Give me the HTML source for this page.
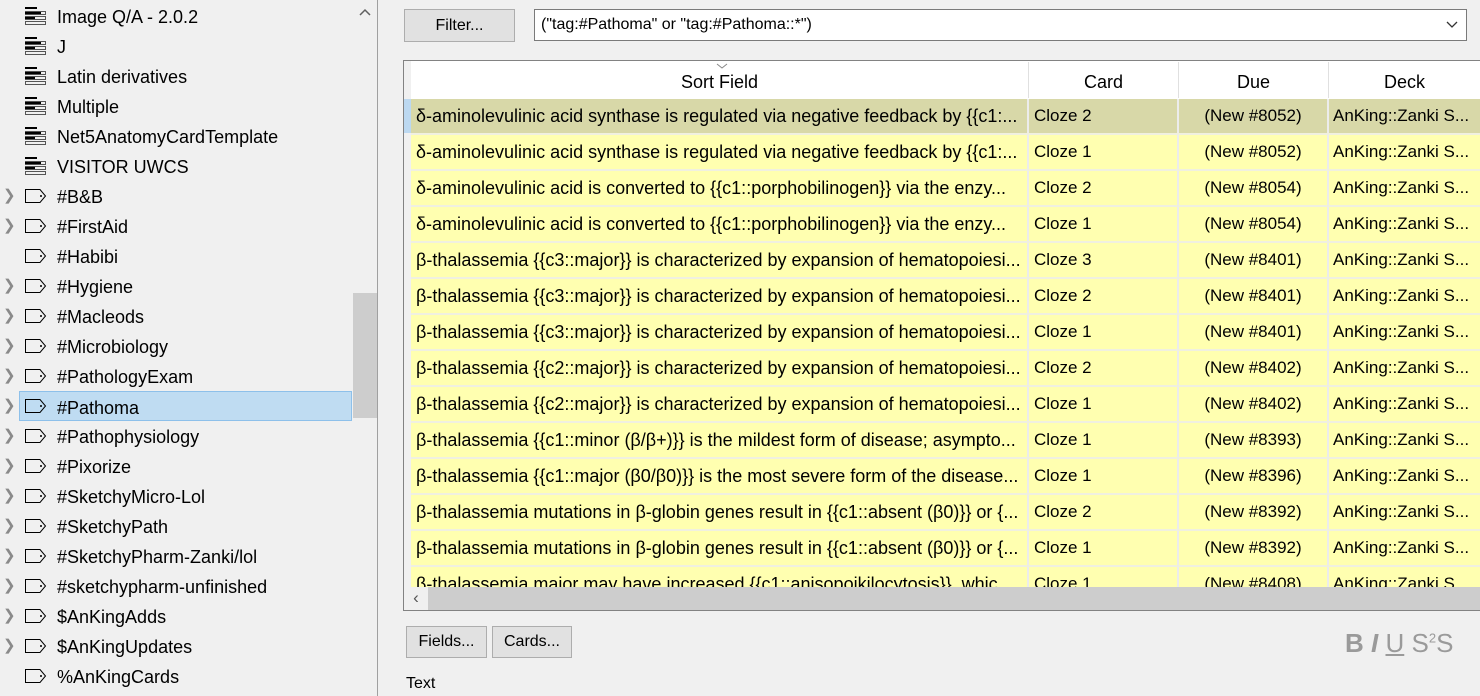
<!DOCTYPE html>
<html><head><meta charset="utf-8"><style>
*{margin:0;padding:0;box-sizing:border-box}
body{width:1480px;height:696px;background:#f0f0f0;font-family:"Liberation Sans",sans-serif;font-size:17px;color:#000;position:relative;overflow:hidden}
.side{position:absolute;left:0;top:0;width:378px;height:696px;border-right:1px solid #a0a0a0;font-size:18px}
.row{position:absolute;left:0;height:30px;width:352px;line-height:30px;white-space:nowrap}
.row .t{position:absolute;left:57px;top:1px}
.row svg{position:absolute;left:24px;top:6px}
.chev{position:absolute;left:3px;top:0;color:#8a8a8a;font-size:15px}
.sel{background:#bfdcf2;border:1px solid #8dc0ea;left:19px;width:333px}
.sel .t{left:37px}.sel svg{left:4px;top:5px}
.vsb{position:absolute;left:353px;top:0;width:24px;height:696px;background:#f0f0f0}
.thumb{position:absolute;left:353px;top:293px;width:24px;height:125px;background:#cdcdcd}
.btn{position:absolute;background:#e1e1e1;border:1px solid #adadad;text-align:center;font-size:16px}
.combo{position:absolute;left:534px;top:9px;width:933px;height:32px;background:#fff;border:1px solid #7a7a7a;line-height:30px;padding-left:6px;font-size:16px}
.tbl{position:absolute;left:403px;top:60px;width:1077px;height:551px;border:1px solid #828282;border-right:none;background:#fff;overflow:hidden}
.hd{position:absolute;top:1px;height:36px;line-height:40px;text-align:center;border-right:1px solid #e0e0e0;background:#fff}
.r{position:absolute;left:7px;width:1070px;height:36px;background:#ffffb0;border-bottom:2px solid #f0f0e0}
.r.s{background:#d8d8a8}
.c{position:absolute;top:0;height:34px;line-height:34px;white-space:nowrap;overflow:hidden;border-right:2px solid #ececec}
.c1{left:0;width:618px;padding-left:5px;font-size:18px}
.c2{left:618px;width:150px;padding-left:5px}
.c3{left:768px;width:150px;text-align:center}
.c4{left:918px;width:160px;padding-left:4px}
.hsb{position:absolute;left:0;top:526px;width:1077px;height:23px;background:#cdcdcd}
.hsb .l{position:absolute;left:0;top:0;width:24px;height:23px;background:#f0f0f0;text-align:center;line-height:22px;color:#555}
</style></head><body>
<div class="side">
<div class="row" style="top:1px"><svg width="24" height="20" viewBox="0 0 24 20"><g fill="none" stroke="#555"><rect x="1.5" y="4.5" width="20" height="3"/><rect x="1.5" y="9.5" width="20" height="3"/><rect x="1.5" y="14.5" width="20" height="3"/></g><rect x="1" y="0" width="12" height="2" fill="#000"/><rect x="1" y="5" width="16" height="2" fill="#000"/><rect x="1" y="10" width="10" height="2" fill="#000"/></svg><span class="t">Image Q/A - 2.0.2</span></div>
<div class="row" style="top:31px"><svg width="24" height="20" viewBox="0 0 24 20"><g fill="none" stroke="#555"><rect x="1.5" y="4.5" width="20" height="3"/><rect x="1.5" y="9.5" width="20" height="3"/><rect x="1.5" y="14.5" width="20" height="3"/></g><rect x="1" y="0" width="12" height="2" fill="#000"/><rect x="1" y="5" width="16" height="2" fill="#000"/><rect x="1" y="10" width="10" height="2" fill="#000"/></svg><span class="t">J</span></div>
<div class="row" style="top:61px"><svg width="24" height="20" viewBox="0 0 24 20"><g fill="none" stroke="#555"><rect x="1.5" y="4.5" width="20" height="3"/><rect x="1.5" y="9.5" width="20" height="3"/><rect x="1.5" y="14.5" width="20" height="3"/></g><rect x="1" y="0" width="12" height="2" fill="#000"/><rect x="1" y="5" width="16" height="2" fill="#000"/><rect x="1" y="10" width="10" height="2" fill="#000"/></svg><span class="t">Latin derivatives</span></div>
<div class="row" style="top:91px"><svg width="24" height="20" viewBox="0 0 24 20"><g fill="none" stroke="#555"><rect x="1.5" y="4.5" width="20" height="3"/><rect x="1.5" y="9.5" width="20" height="3"/><rect x="1.5" y="14.5" width="20" height="3"/></g><rect x="1" y="0" width="12" height="2" fill="#000"/><rect x="1" y="5" width="16" height="2" fill="#000"/><rect x="1" y="10" width="10" height="2" fill="#000"/></svg><span class="t">Multiple</span></div>
<div class="row" style="top:121px"><svg width="24" height="20" viewBox="0 0 24 20"><g fill="none" stroke="#555"><rect x="1.5" y="4.5" width="20" height="3"/><rect x="1.5" y="9.5" width="20" height="3"/><rect x="1.5" y="14.5" width="20" height="3"/></g><rect x="1" y="0" width="12" height="2" fill="#000"/><rect x="1" y="5" width="16" height="2" fill="#000"/><rect x="1" y="10" width="10" height="2" fill="#000"/></svg><span class="t">Net5AnatomyCardTemplate</span></div>
<div class="row" style="top:151px"><svg width="24" height="20" viewBox="0 0 24 20"><g fill="none" stroke="#555"><rect x="1.5" y="4.5" width="20" height="3"/><rect x="1.5" y="9.5" width="20" height="3"/><rect x="1.5" y="14.5" width="20" height="3"/></g><rect x="1" y="0" width="12" height="2" fill="#000"/><rect x="1" y="5" width="16" height="2" fill="#000"/><rect x="1" y="10" width="10" height="2" fill="#000"/></svg><span class="t">VISITOR UWCS</span></div>
<div class="row" style="top:181px"><span class="chev">❯</span><svg width="24" height="18" viewBox="0 0 24 18"><path d="M1.5 2.5H16L21.5 9L16 15.5H1.5Z" fill="none" stroke="#000"/><circle cx="17" cy="9" r="1" fill="#000"/></svg><span class="t">#B&amp;B</span></div>
<div class="row" style="top:211px"><span class="chev">❯</span><svg width="24" height="18" viewBox="0 0 24 18"><path d="M1.5 2.5H16L21.5 9L16 15.5H1.5Z" fill="none" stroke="#000"/><circle cx="17" cy="9" r="1" fill="#000"/></svg><span class="t">#FirstAid</span></div>
<div class="row" style="top:241px"><svg width="24" height="18" viewBox="0 0 24 18"><path d="M1.5 2.5H16L21.5 9L16 15.5H1.5Z" fill="none" stroke="#000"/><circle cx="17" cy="9" r="1" fill="#000"/></svg><span class="t">#Habibi</span></div>
<div class="row" style="top:271px"><span class="chev">❯</span><svg width="24" height="18" viewBox="0 0 24 18"><path d="M1.5 2.5H16L21.5 9L16 15.5H1.5Z" fill="none" stroke="#000"/><circle cx="17" cy="9" r="1" fill="#000"/></svg><span class="t">#Hygiene</span></div>
<div class="row" style="top:301px"><span class="chev">❯</span><svg width="24" height="18" viewBox="0 0 24 18"><path d="M1.5 2.5H16L21.5 9L16 15.5H1.5Z" fill="none" stroke="#000"/><circle cx="17" cy="9" r="1" fill="#000"/></svg><span class="t">#Macleods</span></div>
<div class="row" style="top:331px"><span class="chev">❯</span><svg width="24" height="18" viewBox="0 0 24 18"><path d="M1.5 2.5H16L21.5 9L16 15.5H1.5Z" fill="none" stroke="#000"/><circle cx="17" cy="9" r="1" fill="#000"/></svg><span class="t">#Microbiology</span></div>
<div class="row" style="top:361px"><span class="chev">❯</span><svg width="24" height="18" viewBox="0 0 24 18"><path d="M1.5 2.5H16L21.5 9L16 15.5H1.5Z" fill="none" stroke="#000"/><circle cx="17" cy="9" r="1" fill="#000"/></svg><span class="t">#PathologyExam</span></div>
<div class="row" style="top:391px;width:auto;left:0"><span class="chev">❯</span></div>
<div class="row sel" style="top:391px"><svg width="24" height="18" viewBox="0 0 24 18"><path d="M1.5 2.5H16L21.5 9L16 15.5H1.5Z" fill="none" stroke="#000"/><circle cx="17" cy="9" r="1" fill="#000"/></svg><span class="t">#Pathoma</span></div>
<div class="row" style="top:421px"><span class="chev">❯</span><svg width="24" height="18" viewBox="0 0 24 18"><path d="M1.5 2.5H16L21.5 9L16 15.5H1.5Z" fill="none" stroke="#000"/><circle cx="17" cy="9" r="1" fill="#000"/></svg><span class="t">#Pathophysiology</span></div>
<div class="row" style="top:451px"><span class="chev">❯</span><svg width="24" height="18" viewBox="0 0 24 18"><path d="M1.5 2.5H16L21.5 9L16 15.5H1.5Z" fill="none" stroke="#000"/><circle cx="17" cy="9" r="1" fill="#000"/></svg><span class="t">#Pixorize</span></div>
<div class="row" style="top:481px"><span class="chev">❯</span><svg width="24" height="18" viewBox="0 0 24 18"><path d="M1.5 2.5H16L21.5 9L16 15.5H1.5Z" fill="none" stroke="#000"/><circle cx="17" cy="9" r="1" fill="#000"/></svg><span class="t">#SketchyMicro-Lol</span></div>
<div class="row" style="top:511px"><span class="chev">❯</span><svg width="24" height="18" viewBox="0 0 24 18"><path d="M1.5 2.5H16L21.5 9L16 15.5H1.5Z" fill="none" stroke="#000"/><circle cx="17" cy="9" r="1" fill="#000"/></svg><span class="t">#SketchyPath</span></div>
<div class="row" style="top:541px"><span class="chev">❯</span><svg width="24" height="18" viewBox="0 0 24 18"><path d="M1.5 2.5H16L21.5 9L16 15.5H1.5Z" fill="none" stroke="#000"/><circle cx="17" cy="9" r="1" fill="#000"/></svg><span class="t">#SketchyPharm-Zanki/lol</span></div>
<div class="row" style="top:571px"><span class="chev">❯</span><svg width="24" height="18" viewBox="0 0 24 18"><path d="M1.5 2.5H16L21.5 9L16 15.5H1.5Z" fill="none" stroke="#000"/><circle cx="17" cy="9" r="1" fill="#000"/></svg><span class="t">#sketchypharm-unfinished</span></div>
<div class="row" style="top:601px"><span class="chev">❯</span><svg width="24" height="18" viewBox="0 0 24 18"><path d="M1.5 2.5H16L21.5 9L16 15.5H1.5Z" fill="none" stroke="#000"/><circle cx="17" cy="9" r="1" fill="#000"/></svg><span class="t">$AnKingAdds</span></div>
<div class="row" style="top:631px"><span class="chev">❯</span><svg width="24" height="18" viewBox="0 0 24 18"><path d="M1.5 2.5H16L21.5 9L16 15.5H1.5Z" fill="none" stroke="#000"/><circle cx="17" cy="9" r="1" fill="#000"/></svg><span class="t">$AnKingUpdates</span></div>
<div class="row" style="top:661px"><svg width="24" height="18" viewBox="0 0 24 18"><path d="M1.5 2.5H16L21.5 9L16 15.5H1.5Z" fill="none" stroke="#000"/><circle cx="17" cy="9" r="1" fill="#000"/></svg><span class="t">%AnKingCards</span></div>
<div class="vsb"><svg style="position:absolute;left:6px;top:8px" width="12" height="8" viewBox="0 0 12 8"><path d="M1 7L6 2L11 7" fill="none" stroke="#606060" stroke-width="1.5"/></svg></div>
<div class="thumb"></div>
</div>

<div class="btn" style="left:404px;top:9px;width:111px;height:33px;line-height:31px">Filter...</div>
<div class="combo">("tag:#Pathoma" or "tag:#Pathoma::*")<svg style="position:absolute;right:8px;top:11px" width="12" height="8" viewBox="0 0 12 8"><path d="M1 1L6 6L11 1" fill="none" stroke="#333" stroke-width="1.3"/></svg></div>

<div class="tbl">
<div style="position:absolute;left:0;top:0;width:7px;height:526px;background:#f0f0f0"></div>
<div style="position:absolute;left:0;top:38px;width:7px;height:34px;background:#bcd8f0"></div>
<div class="hd" style="left:7px;width:618px;font-size:18px">Sort Field<svg style="position:absolute;left:305px;top:1px" width="12" height="6" viewBox="0 0 12 6"><path d="M1 1L6 5L11 1" fill="none" stroke="#888"/></svg></div>
<div class="hd" style="left:625px;width:150px;font-size:18px">Card</div>
<div class="hd" style="left:775px;width:150px;font-size:18px">Due</div>
<div class="hd" style="left:925px;width:152px;font-size:18px">Deck</div>

<div class="r s" style="top:38px"><div class="c c1">δ-aminolevulinic acid synthase is regulated via negative feedback by {{c1:...</div><div class="c c2">Cloze 2</div><div class="c c3">(New #8052)</div><div class="c c4">AnKing::Zanki S...</div></div>
<div class="r" style="top:74px"><div class="c c1">δ-aminolevulinic acid synthase is regulated via negative feedback by {{c1:...</div><div class="c c2">Cloze 1</div><div class="c c3">(New #8052)</div><div class="c c4">AnKing::Zanki S...</div></div>
<div class="r" style="top:110px"><div class="c c1">δ-aminolevulinic acid is converted to {{c1::porphobilinogen}} via the enzy...</div><div class="c c2">Cloze 2</div><div class="c c3">(New #8054)</div><div class="c c4">AnKing::Zanki S...</div></div>
<div class="r" style="top:146px"><div class="c c1">δ-aminolevulinic acid is converted to {{c1::porphobilinogen}} via the enzy...</div><div class="c c2">Cloze 1</div><div class="c c3">(New #8054)</div><div class="c c4">AnKing::Zanki S...</div></div>
<div class="r" style="top:182px"><div class="c c1">β-thalassemia {{c3::major}} is characterized by expansion of hematopoiesi...</div><div class="c c2">Cloze 3</div><div class="c c3">(New #8401)</div><div class="c c4">AnKing::Zanki S...</div></div>
<div class="r" style="top:218px"><div class="c c1">β-thalassemia {{c3::major}} is characterized by expansion of hematopoiesi...</div><div class="c c2">Cloze 2</div><div class="c c3">(New #8401)</div><div class="c c4">AnKing::Zanki S...</div></div>
<div class="r" style="top:254px"><div class="c c1">β-thalassemia {{c3::major}} is characterized by expansion of hematopoiesi...</div><div class="c c2">Cloze 1</div><div class="c c3">(New #8401)</div><div class="c c4">AnKing::Zanki S...</div></div>
<div class="r" style="top:290px"><div class="c c1">β-thalassemia {{c2::major}} is characterized by expansion of hematopoiesi...</div><div class="c c2">Cloze 2</div><div class="c c3">(New #8402)</div><div class="c c4">AnKing::Zanki S...</div></div>
<div class="r" style="top:326px"><div class="c c1">β-thalassemia {{c2::major}} is characterized by expansion of hematopoiesi...</div><div class="c c2">Cloze 1</div><div class="c c3">(New #8402)</div><div class="c c4">AnKing::Zanki S...</div></div>
<div class="r" style="top:362px"><div class="c c1">β-thalassemia {{c1::minor (β/β+)}} is the mildest form of disease; asympto...</div><div class="c c2">Cloze 1</div><div class="c c3">(New #8393)</div><div class="c c4">AnKing::Zanki S...</div></div>
<div class="r" style="top:398px"><div class="c c1">β-thalassemia {{c1::major (β0/β0)}} is the most severe form of the disease...</div><div class="c c2">Cloze 1</div><div class="c c3">(New #8396)</div><div class="c c4">AnKing::Zanki S...</div></div>
<div class="r" style="top:434px"><div class="c c1">β-thalassemia mutations in β-globin genes result in {{c1::absent (β0)}} or {...</div><div class="c c2">Cloze 2</div><div class="c c3">(New #8392)</div><div class="c c4">AnKing::Zanki S...</div></div>
<div class="r" style="top:470px"><div class="c c1">β-thalassemia mutations in β-globin genes result in {{c1::absent (β0)}} or {...</div><div class="c c2">Cloze 1</div><div class="c c3">(New #8392)</div><div class="c c4">AnKing::Zanki S...</div></div>
<div class="r" style="top:506px"><div class="c c1">β-thalassemia major may have increased {{c1::anisopoikilocytosis}}, whic...</div><div class="c c2">Cloze 1</div><div class="c c3">(New #8408)</div><div class="c c4">AnKing::Zanki S...</div></div>
<div class="hsb"><div class="l">‹</div></div>
</div>

<div class="btn" style="left:406px;top:626px;width:81px;height:32px;line-height:30px">Fields...</div>
<div class="btn" style="left:492px;top:626px;width:80px;height:32px;line-height:30px">Cards...</div>
<div style="position:absolute;left:1345px;top:628px;font-size:26px;color:#9a9a9a;white-space:nowrap;width:140px"><b>B</b> <b><i>I</i></b> <u>U</u> S<sup style="font-size:13px">2</sup>S</div>
<div style="position:absolute;left:406px;top:675px;font-size:16px">Text</div>
</body></html>
